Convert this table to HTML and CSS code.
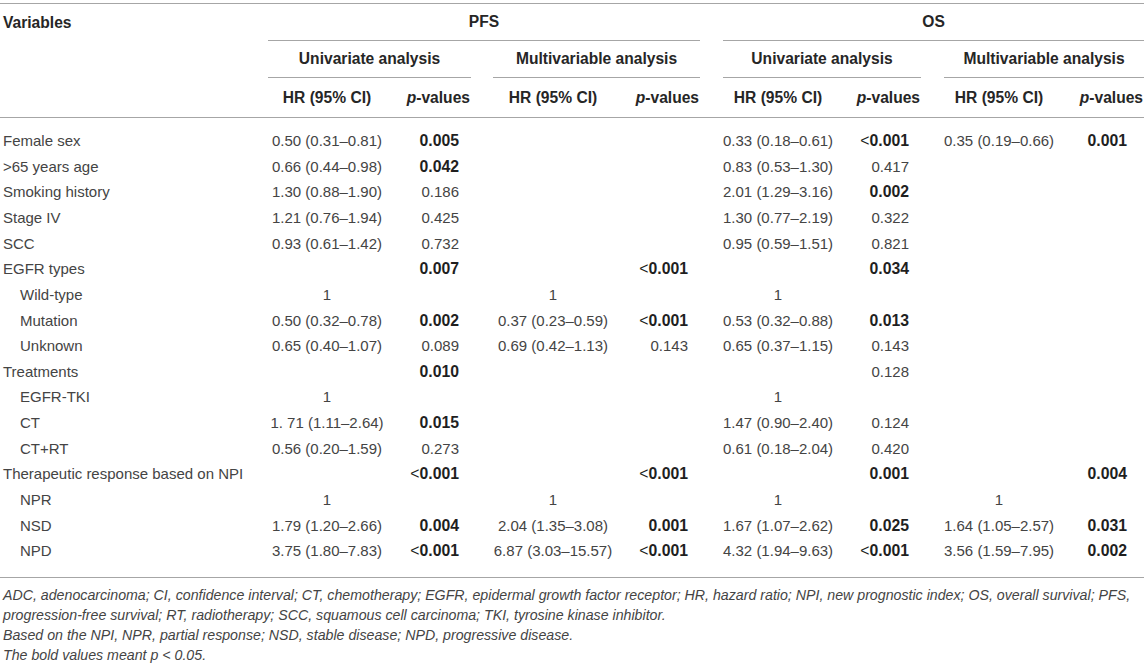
FILE: index.html
```html
<!DOCTYPE html>
<html lang="en">
<head>
<meta charset="utf-8">
<title>Cox regression table</title>
<link rel="stylesheet" href="styles.css">
</head>
<body>
<div class="page">
<table class="data">
  <colgroup>
    <col class="c0"><col class="c1"><col class="c2"><col class="c3"><col class="c4"><col class="c5"><col class="c6"><col class="c7"><col class="c8">
  </colgroup>
  <thead>
    <tr class="h1">
      <th class="var">Variables</th>
      <th colspan="4" class="grp"><div class="gl">PFS</div></th>
      <th colspan="4" class="grp"><div class="gl gap23">OS</div></th>
    </tr>
    <tr class="h2">
      <th class="blank"></th>
      <th colspan="2" class="grp"><div class="gl">Univariate analysis</div></th>
      <th colspan="2" class="grp"><div class="gl gap22">Multivariable analysis</div></th>
      <th colspan="2" class="grp"><div class="gl gap23">Univariate analysis</div></th>
      <th colspan="2" class="grp"><div class="gl gap23">Multivariable analysis</div></th>
    </tr>
    <tr class="h3">
      <th class="blank"></th>
      <th class="hr">HR (95% CI)</th><th class="pv"><i>p</i>-values</th>
      <th class="hr">HR (95% CI)</th><th class="pv"><i>p</i>-values</th>
      <th class="hr">HR (95% CI)</th><th class="pv"><i>p</i>-values</th>
      <th class="hr">HR (95% CI)</th><th class="pv"><i>p</i>-values</th>
    </tr>
  </thead>
  <tbody>
    <tr class="first"><td>Female sex</td><td>0.50 (0.31–0.81)</td><td><b>0.005</b></td><td></td><td></td><td>0.33 (0.18–0.61)</td><td><b><span class="lt">&lt;</span>0.001</b></td><td>0.35 (0.19–0.66)</td><td><b>0.001</b></td></tr>
    <tr><td>&gt;65 years age</td><td>0.66 (0.44–0.98)</td><td><b>0.042</b></td><td></td><td></td><td>0.83 (0.53–1.30)</td><td>0.417</td><td></td><td></td></tr>
    <tr><td>Smoking history</td><td>1.30 (0.88–1.90)</td><td>0.186</td><td></td><td></td><td>2.01 (1.29–3.16)</td><td><b>0.002</b></td><td></td><td></td></tr>
    <tr><td>Stage IV</td><td>1.21 (0.76–1.94)</td><td>0.425</td><td></td><td></td><td>1.30 (0.77–2.19)</td><td>0.322</td><td></td><td></td></tr>
    <tr><td>SCC</td><td>0.93 (0.61–1.42)</td><td>0.732</td><td></td><td></td><td>0.95 (0.59–1.51)</td><td>0.821</td><td></td><td></td></tr>
    <tr><td>EGFR types</td><td></td><td><b>0.007</b></td><td></td><td><b><span class="lt">&lt;</span>0.001</b></td><td></td><td><b>0.034</b></td><td></td><td></td></tr>
    <tr class="sub"><td>Wild-type</td><td>1</td><td></td><td>1</td><td></td><td>1</td><td></td><td></td><td></td></tr>
    <tr class="sub"><td>Mutation</td><td>0.50 (0.32–0.78)</td><td><b>0.002</b></td><td>0.37 (0.23–0.59)</td><td><b><span class="lt">&lt;</span>0.001</b></td><td>0.53 (0.32–0.88)</td><td><b>0.013</b></td><td></td><td></td></tr>
    <tr class="sub"><td>Unknown</td><td>0.65 (0.40–1.07)</td><td>0.089</td><td>0.69 (0.42–1.13)</td><td>0.143</td><td>0.65 (0.37–1.15)</td><td>0.143</td><td></td><td></td></tr>
    <tr><td>Treatments</td><td></td><td><b>0.010</b></td><td></td><td></td><td></td><td>0.128</td><td></td><td></td></tr>
    <tr class="sub"><td>EGFR-TKI</td><td>1</td><td></td><td></td><td></td><td>1</td><td></td><td></td><td></td></tr>
    <tr class="sub"><td>CT</td><td>1. 71 (1.11–2.64)</td><td><b>0.015</b></td><td></td><td></td><td>1.47 (0.90–2.40)</td><td>0.124</td><td></td><td></td></tr>
    <tr class="sub"><td>CT+RT</td><td>0.56 (0.20–1.59)</td><td>0.273</td><td></td><td></td><td>0.61 (0.18–2.04)</td><td>0.420</td><td></td><td></td></tr>
    <tr><td>Therapeutic response based on NPI</td><td></td><td><b><span class="lt">&lt;</span>0.001</b></td><td></td><td><b><span class="lt">&lt;</span>0.001</b></td><td></td><td><b>0.001</b></td><td></td><td><b>0.004</b></td></tr>
    <tr class="sub"><td>NPR</td><td>1</td><td></td><td>1</td><td></td><td>1</td><td></td><td>1</td><td></td></tr>
    <tr class="sub"><td>NSD</td><td>1.79 (1.20–2.66)</td><td><b>0.004</b></td><td>2.04 (1.35–3.08)</td><td><b>0.001</b></td><td>1.67 (1.07–2.62)</td><td><b>0.025</b></td><td>1.64 (1.05–2.57)</td><td><b>0.031</b></td></tr>
    <tr class="sub last"><td>NPD</td><td>3.75 (1.80–7.83)</td><td><b><span class="lt">&lt;</span>0.001</b></td><td>6.87 (3.03–15.57)</td><td><b><span class="lt">&lt;</span>0.001</b></td><td>4.32 (1.94–9.63)</td><td><b><span class="lt">&lt;</span>0.001</b></td><td>3.56 (1.59–7.95)</td><td><b>0.002</b></td></tr>
  </tbody>
</table>
<div class="notes">
  <p>ADC, adenocarcinoma; CI, confidence interval; CT, chemotherapy; EGFR, epidermal growth factor receptor; HR, hazard ratio; NPI, new prognostic index; OS, overall survival; PFS, progression-free survival; RT, radiotherapy; SCC, squamous cell carcinoma; TKI, tyrosine kinase inhibitor.</p>
  <p>Based on the NPI, NPR, partial response; NSD, stable disease; NPD, progressive disease.</p>
  <p>The bold values meant p &lt; 0.05.</p>
</div>
</div>
</body>
</html>
```

FILE: styles.css
```css
html, body {
  margin: 0;
  padding: 0;
  background: #ffffff;
}

.page {
  width: 1144px;
  padding-top: 3px;
  font-family: "Liberation Sans", Arial, Helvetica, sans-serif;
  color: #444444;
}

.data {
  width: 1144px;
  table-layout: fixed;
  border-collapse: separate;
  border-spacing: 0;
  border-top: 1px solid #a6a6a6;
  border-bottom: 1px solid #a6a6a6;
  font-size: 15px;
}

.c0 { width: 268px; }
.c1 { width: 118px; }
.c2 { width: 85px; }
.c3 { width: 142px; }
.c4 { width: 87px; }
.c5 { width: 133px; }
.c6 { width: 88px; }
.c7 { width: 133px; }
.c8 { width: 90px; }

.data th {
  font-weight: bold;
  font-size: 15.6px;
  line-height: 18px;
  color: #262626;
  padding: 0;
  white-space: nowrap;
}

.data th.var {
  text-align: left;
  padding-left: 3px;
  height: 37px;
  vertical-align: middle;
}

.gl {
  height: 36px;
  display: flex;
  align-items: center;
  justify-content: center;
  border-bottom: 1px solid #a6a6a6;
}

.gap22 { margin-left: 22px; }
.gap23 { margin-left: 23px; }

.h3 th {
  height: 39px;
  border-bottom: 1px solid #a6a6a6;
  vertical-align: middle;
}

.h3 th.hr { text-align: center; }
.h3 th.pv { text-align: right; padding-right: 1px; }

.h3 th:nth-child(4) { padding-left: 22px; }
.h3 th:nth-child(6),
.h3 th:nth-child(8) { padding-left: 23px; }

.data td {
  padding: 4px 0;
  line-height: 17.625px;
  white-space: nowrap;
  vertical-align: middle;
  text-align: center;
}

.data td:first-child {
  text-align: left;
  padding-left: 3px;
}

.data tr.sub td:first-child { padding-left: 20px; }

.data td:nth-child(4) { padding-left: 22px; }
.data td:nth-child(6),
.data td:nth-child(8) { padding-left: 23px; }

.data td:nth-child(3) { text-align: right; padding-right: 12px; }
.data td:nth-child(5),
.data td:nth-child(7) { text-align: right; padding-right: 12px; }
.data td:nth-child(9) { text-align: right; padding-right: 17px; }

.data tr.first td { padding-top: 14.2px; }
.data tr.last td { padding-bottom: 17.2px; }

.data b {
  font-weight: bold;
  font-size: 15.8px;
  line-height: 0;
  color: #1f1f1f;
}

.lt {
  font-weight: normal;
}

.notes {
  margin-top: 7px;
  padding-left: 3px;
  font-size: 14.2px;
  line-height: 20px;
  font-style: italic;
  color: #444444;
}

.notes p {
  margin: 0;
}
```
